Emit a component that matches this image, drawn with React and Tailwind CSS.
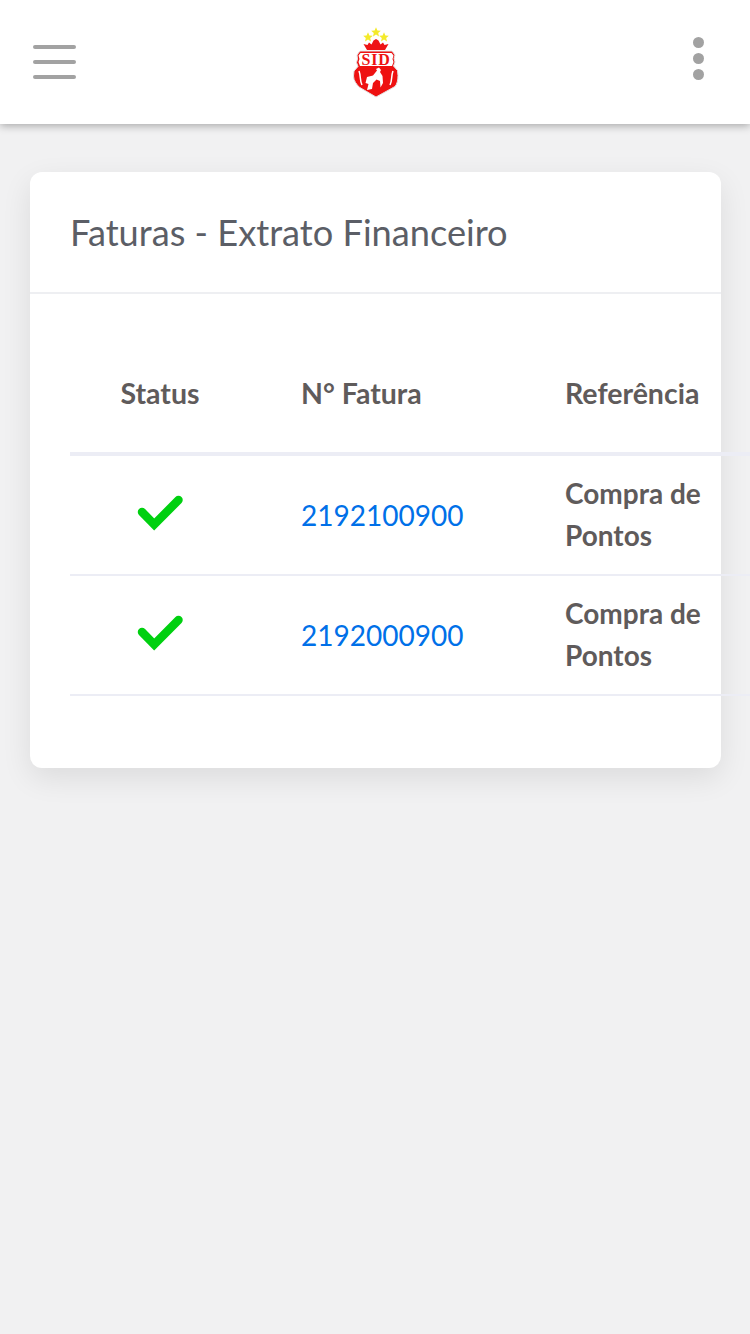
const Star = ({ x, y }) => (
  <path
    transform={`translate(${x} ${y})`}
    d="M0-4.800L1.400-1.500L4.800-1.300L2.200 1L3 4.400L0 2.600L-3 4.400L-2.200 1L-4.800-1.300L-1.400-1.500Z"
    fill="#f4ea2a"
  />
);

const Logo = () => (
  <svg width="84" height="76" viewBox="0 0 84 76">
    <Star x={34} y={13} />
    <Star x={42} y={8} />
    <Star x={50} y={13} />
    <path d="M33 26l-3.500-6 4 1 1.500-2.500 2.500 2 2-4 2.500-1.500 2.500 1.500 2 4 2.500-2 1.500 2.500 4-1-3.500 6z" fill="#ee1414" />
    <path d="M23 31l3-4h32l3 4-1 3.500 1 3.500-1.500 4 4 4.500.5 5c0 5-1 8.500-3 11L42 73 25 63c-2-2.500-5.500-6-5.500-11l.5-5 4-4.500-1.500-4 1-3.500z" fill="#ee1111" stroke="#e2e2e2" strokeWidth="1" />
    <path d="M26.500 29h31l2 2.500-1 3.500 1 3-1.500 4H26l-1.500-4 1-3-1-3.500z" fill="#fff" />
    <text x="42" y="41" textAnchor="middle" fontFamily="Liberation Serif, serif" fontWeight="700" fontSize="16" letterSpacing="0.8" fill="#ee1111">SID</text>
    <path d="M33 66l1.500-6-3-1 1.500-6 6-1.500 4-5-1-1.500 3-1.500 2 2.500-1 2 2.500 4 .5 7-2.500 4.500-.5-6.500-3.500-1.500-3.500 3.500-1 6z" fill="#fff" />
    <path d="M25 47c2 5 .5 9 3 14M59 47c-2 5-.5 9-3 14" fill="none" stroke="#fff" strokeWidth="1.500" />
  </svg>
);

const rows = ["2192100900", "2192000900"];

const App = () => {
  return (
    <div className="min-h-[1334px] bg-[#f1f1f2] font-['Lato',sans-serif]">
      <header className="flex h-[124px] items-center justify-between bg-white pl-[33px] pr-[46px] shadow-[0_2px_8px_rgba(0,0,0,0.3)]">
        <div className="flex w-[43px] flex-col gap-[11px]">
          <span className="h-[4px] rounded-full bg-[#a2a2a2]"></span>
          <span className="h-[4px] rounded-full bg-[#a2a2a2]"></span>
          <span className="h-[4px] rounded-full bg-[#a2a2a2]"></span>
        </div>
        <div className="pr-[18px]">
          <Logo />
        </div>
        <div className="flex flex-col gap-[5px] pb-[7px]">
          <span className="h-[11px] w-[11px] rounded-full bg-[#a2a2a2]"></span>
          <span className="h-[11px] w-[11px] rounded-full bg-[#a2a2a2]"></span>
          <span className="h-[11px] w-[11px] rounded-full bg-[#a2a2a2]"></span>
        </div>
      </header>

      <main className="pl-[30px] pt-[48px]">
        <div className="w-[691px] rounded-[12px] bg-white pb-[72px] shadow-[0_10px_30px_rgba(0,0,0,0.09)]">
          <h2 className="h-[122px] border-b-2 border-[#eeeff2] pl-[40px] pt-[35px] text-[36.200px] leading-[50px] text-[#5b5e66]">
            Faturas - Extrato Financeiro
          </h2>
          <table className="ml-[40px] w-[680px] table-fixed border-separate border-spacing-0 text-left text-[#5f5b5b]">
            <thead>
              <tr className="h-[162px] text-[28.500px]">
                <th className="w-[180px] border-b-[4px] border-[#ecedf5] pt-[40px] text-center font-bold">Status</th>
                <th className="w-[264px] border-b-[4px] border-[#ecedf5] pl-[51px] pt-[40px] font-bold">N° Fatura</th>
                <th className="border-b-[4px] border-[#ecedf5] pl-[51px] pt-[40px] font-bold">Referência</th>
              </tr>
            </thead>
            <tbody>
              {rows.map((numero) => (
                <tr key={numero} className="h-[120px]">
                  <td className="border-b-2 border-[#ecedf5] pb-[4px]">
                    <svg className="mx-auto" width="46" height="36" viewBox="0 0 46 36">
                      <path d="M5 17L17.200 29.500L41.500 5" fill="none" stroke="#00d010" strokeWidth="8.500" strokeLinecap="round" strokeLinejoin="miter" />
                    </svg>
                  </td>
                  <td className="border-b-2 border-[#ecedf5] pl-[51px] text-[28px] text-[#0070e8]">{numero}</td>
                  <td className="border-b-2 border-[#ecedf5] pl-[51px] pr-[40px] pb-[2px] text-[28px] font-bold leading-[42px]">Compra de Pontos</td>
                </tr>
              ))}
            </tbody>
          </table>
        </div>
      </main>
    </div>
  );
};

export default App;
